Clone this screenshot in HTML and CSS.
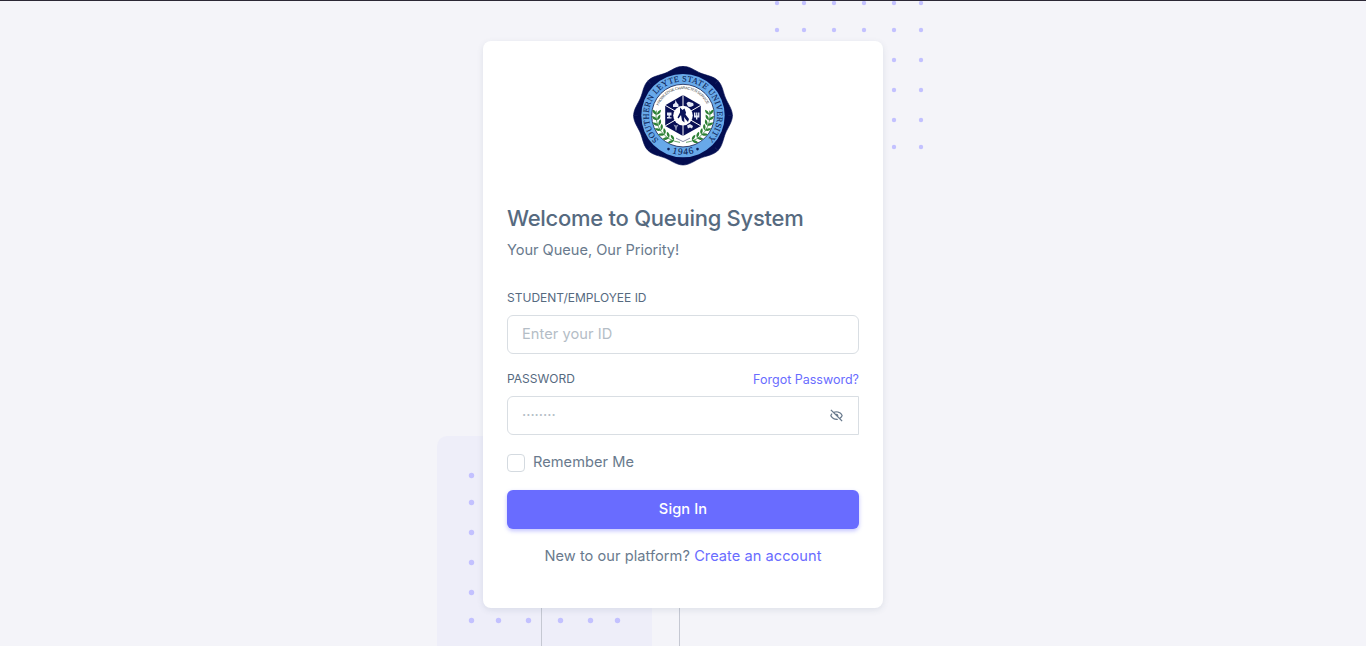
FILE: index.html
```html
<!DOCTYPE html>
<html lang="en">
<head>
<meta charset="utf-8">
<title>Queuing System</title>
<link rel="stylesheet" href="styles.css">
</head>
<body>
<main class="page">
  <svg class="backdrop" viewBox="0 0 1366 646" aria-hidden="true">
    <defs>
      <g id="pair"><circle cx="894" r="2.2"/><circle cx="921" r="2.2"/></g>
      <g id="row"><circle cx="777" r="2.2"/><circle cx="804" r="2.2"/><circle cx="834" r="2.2"/><circle cx="864" r="2.2"/><use href="#pair"/></g>
    </defs>
    <rect x="437" y="436" width="215" height="230" rx="10" fill="#eeeef9"/>
    <g class="dots">
      <use href="#row" y="3"/><use href="#row" y="30"/>
      <use href="#pair" y="60"/><use href="#pair" y="90"/><use href="#pair" y="120"/><use href="#pair" y="147"/>
    </g>
    <g class="dots big">
      <circle cx="471.5" cy="475.5"/><circle cx="471.5" cy="502.5"/><circle cx="471.5" cy="532.5"/><circle cx="471.5" cy="562.5"/><circle cx="471.5" cy="592.5"/>
      <circle cx="471.5" cy="620.5"/><circle cx="498.5" cy="620.5"/><circle cx="528.5" cy="620.5"/><circle cx="560.5" cy="620.5"/><circle cx="590.5" cy="620.5"/><circle cx="617.5" cy="620.5"/>
    </g>
    <path d="M541.5 600V646M679.5 600V646" stroke="#c5c8d2"/>
    <path d="M0 .5H1366" stroke="#2b2735"/>
  </svg>
  <form class="card">
    <svg class="seal" viewBox="-50 -49.6 100 100" role="img" aria-label="University seal">
      <defs>
        <path id="lobe" d="M0 0V-49.4C6.5-49.4 12.1-44.8 17.6-42.5C23.1-40.2 30.4-39.5 34.93-34.93Z"/>
        <path id="nameArc" d="M-24.2 24.2A34.2 34.2 0 1 1 24.2 24.2"/>
        <path id="yearArc" d="M-26 29.2A39.1 39.1 0 0 0 26 29.2"/>
        <path id="mottoArc" d="M-24.5-9.9A26.4 26.4 0 0 1 24.5-9.9"/>
        <path id="leaf" d="M0 0C-3.3-.3-4.5-2.6-4.5-5C-1.8-4.3-.3-2.5 0 0C.2-2.5 1.5-4.3 4-5C4.1-2.4 3-.4 0 0Z"/>
        <g id="branch">
          <path d="M-3 26.8A27 27 0 0 1-26.5-5" fill="none" stroke="#2d7b32" stroke-width=".7"/>
          <use href="#leaf" transform="rotate(200) translate(0 -26.2) rotate(90)"/>
          <use href="#leaf" transform="rotate(212) translate(0 -26.2) rotate(90)"/>
          <use href="#leaf" transform="rotate(224) translate(0 -26.2) rotate(90)"/>
          <use href="#leaf" transform="rotate(236) translate(0 -26.2) rotate(90)"/>
          <use href="#leaf" transform="rotate(248) translate(0 -26.2) rotate(90)"/>
          <use href="#leaf" transform="rotate(260) translate(0 -26.2) rotate(90)"/>
          <use href="#leaf" transform="rotate(272) translate(0 -26.2) rotate(90)"/>
        </g>
      </defs>
      <g fill="#030d50" stroke="#030d50" stroke-width=".6">
        <circle r="45"/>
        <use href="#lobe"/><use href="#lobe" transform="rotate(45)"/><use href="#lobe" transform="rotate(90)"/><use href="#lobe" transform="rotate(135)"/>
        <use href="#lobe" transform="rotate(180)"/><use href="#lobe" transform="rotate(225)"/><use href="#lobe" transform="rotate(270)"/><use href="#lobe" transform="rotate(315)"/>
      </g>
      <circle r="41.7" fill="#68a9ea"/>
      <circle r="31.3" fill="#fff" stroke="#101d4d" stroke-width=".8"/>
      <g class="seal-text">
        <text font-size="8.4"><textPath href="#nameArc" textLength="160" lengthAdjust="spacing">SOUTHERN LEYTE STATE UNIVERSITY</textPath></text>
        <text font-size="9.5" text-anchor="middle"><textPath href="#yearArc" startOffset="50%" textLength="22">1946</textPath></text>
        <text class="motto" font-size="3.9"><textPath href="#mottoArc" textLength="61">KNOWLEDGE CHARACTER SERVICE</textPath></text>
      </g>
      <circle cx="-14.5" cy="33.5" r="1.3" fill="#0b1e55"/><circle cx="14.5" cy="33.5" r="1.3" fill="#0b1e55"/>
      <g fill="#2d8035"><use href="#branch"/><use href="#branch" transform="scale(-1 1)"/></g>
      <path d="M0-20.5L17.8-10.3V10.3L0 20.5L-17.8 10.3V-10.3Z" fill="#080f55"/>
      <path d="M0-20.5V20.5M-17.8-10.3L17.8 10.3M-17.8 10.3L17.8-10.3" stroke="#fff" stroke-width="1"/>
      <g fill="#e5e9f6">
        <path d="M-7.5-15.5L-6-12.5L-4.5-11V-8.5H-10V-11L-8-12.5Z"/>
        <path d="M3.5-12Q5-15 8-13Q11-13 10.5-10Q8-8 5-9Z"/>
        <path d="M-16-3H-11.5V0H-13.2V1.6H-11.5V3H-16V1.5H-14.5V0H-16Z"/>
        <path d="M11-3H12.4V0H13.1V-3H14.4V0H15.1V-3H16.4V2H14.4V4H13V2H11Z"/>
        <path d="M-9.5 9L-6.8 10L-4.5 9L-6 12L-6.5 15H-7.5L-8 12Z" opacity=".6"/>
        <path d="M4 10L7 8.5L10 10.5L9 13L7 12L5 13Z"/>
      </g>
      <circle r="9.8" fill="#fff"/>
      <path d="M-3-8L-.5-5.5L1.5-7L3-3L2.5-1L6 3.5L5 6.5L2.6 3.6L1 1.5L1.5 7L-1 5L-2-.5L-4.5 3L-5.5 2L-3-3Z" fill="#0a1459"/>
      <path d="M-7 22.5L0 26L7 22.5" fill="none" stroke="#6b7394" stroke-width=".8"/>
    </svg>
    <h1 class="title">Welcome to Queuing System</h1>
    <p class="tagline">Your Queue, Our Priority!</p>
    <label class="caption" for="uid">STUDENT/EMPLOYEE ID</label>
    <div class="field"><input id="uid" class="entry" type="text" placeholder="Enter your ID"></div>
    <div class="caption-row">
      <label class="caption" for="pwd">PASSWORD</label>
      <a class="link forgot">Forgot Password?</a>
    </div>
    <div class="field field-password">
      <input id="pwd" class="entry secret" type="password" placeholder="········">
      <svg class="eye" viewBox="0 0 24 24" aria-hidden="true"><path d="M12 19c.946 0 1.81-.103 2.598-.281l-1.757-1.757c-.273.021-.55.038-.841.038-5.351 0-7.424-3.846-7.926-5a8.642 8.642 0 0 1 1.508-2.297L4.184 8.305c-1.538 1.667-2.121 3.346-2.132 3.379a.994.994 0 0 0 0 .633C2.073 12.383 4.367 19 12 19zm0-14c-1.837 0-3.346.396-4.604.981L3.707 2.293 2.293 3.707l18 18 1.414-1.414-3.319-3.319c2.614-1.951 3.547-4.615 3.561-4.657a.994.994 0 0 0 0-.633C21.927 11.617 19.633 5 12 5zm4.972 10.558-2.28-2.28c.19-.39.308-.819.308-1.278 0-1.641-1.359-3-3-3-.459 0-.888.118-1.277.309L8.915 7.501A9.26 9.26 0 0 1 12 7c5.351 0 7.424 3.846 7.926 5-.302.692-1.166 2.342-2.954 3.558z"/></svg>
    </div>
    <label class="remember"><input class="check" type="checkbox"><span>Remember Me</span></label>
    <button class="submit" type="button">Sign In</button>
    <p class="signup"><span>New to our platform?</span> <a class="link">Create an account</a></p>
  </form>
</main>
</body>
</html>
```
FILE: styles.css
```css
* { box-sizing: border-box; }
body {
  margin: 0;
  background: #f4f4f9;
  color: #697a8d;
  font-family: Inter, "Liberation Sans", sans-serif;
  font-size: 14.6px;
  line-height: 23px;
}
.page { position: relative; display: flex; justify-content: center; height: 646px; padding-top: 41px; overflow: hidden; }
.backdrop { position: absolute; inset: 0; width: 1366px; height: 646px; }
.dots { fill: #c3c1ff; }
.big circle { r: 2.7px; }
.card {
  position: relative;
  display: flex;
  flex-direction: column;
  width: 400px;
  height: 567px;
  padding: 25px 24px 0;
  border-radius: 8px;
  background: #fff;
  box-shadow: 0 2px 6px rgba(67, 89, 113, .12);
}
.seal { width: 100px; height: 100px; margin: 0 auto; flex: none; }
.seal-text { font-family: "Liberation Serif", serif; fill: #0b1e55; stroke: #0b1e55; stroke-width: .1px; }
.motto { font-family: "Liberation Sans", sans-serif; fill: #444; stroke: none; }
.title { margin: 36px 0 0; height: 33px; color: #566a7f; font-size: 22px; font-weight: 500; line-height: 32px; letter-spacing: -.27px; white-space: nowrap; }
.tagline { margin: 4px 0 0; height: 23px; letter-spacing: -.03px; }
.caption { color: #566a7f; font-size: 12px; line-height: 18px; }
.tagline + .caption { margin-top: 27px; }
.field { display: flex; align-items: center; height: 39px; margin-top: 8px; padding: 0 14px; border: 1px solid #d9dee3; border-radius: 6px; }
.field-password { border-radius: 6px 0 0 6px; }
.entry { flex: 1; min-width: 0; padding: 0; border: 0; outline: 0; background: none; color: inherit; font: inherit; letter-spacing: .06px; }
.secret { letter-spacing: 0; }
.entry::placeholder { color: #b4bdc6; }
.eye { width: 15px; height: 15px; fill: #697a8d; }
.caption-row { display: flex; justify-content: space-between; align-items: center; height: 18px; margin-top: 16px; }
.link { color: #696cff; }
.forgot { padding-top: 2px; font-size: 12.5px; line-height: 20px; }
.remember { display: flex; align-items: center; gap: 8px; height: 23px; margin-top: 16px; letter-spacing: .05px; }
.check { appearance: none; width: 18px; height: 18px; margin: 1px 0 0; border: 1px solid #d4dae0; border-radius: 4px; }
.submit { height: 39px; margin-top: 16px; border: 0; border-radius: 6px; background: #696cff; color: #fff; font: inherit; font-weight: 500; letter-spacing: .1px; box-shadow: 0 2px 4px rgba(105, 108, 255, .4); }
.signup { margin: 16px 0 0; text-align: center; letter-spacing: .05px; white-space: nowrap; }
```
